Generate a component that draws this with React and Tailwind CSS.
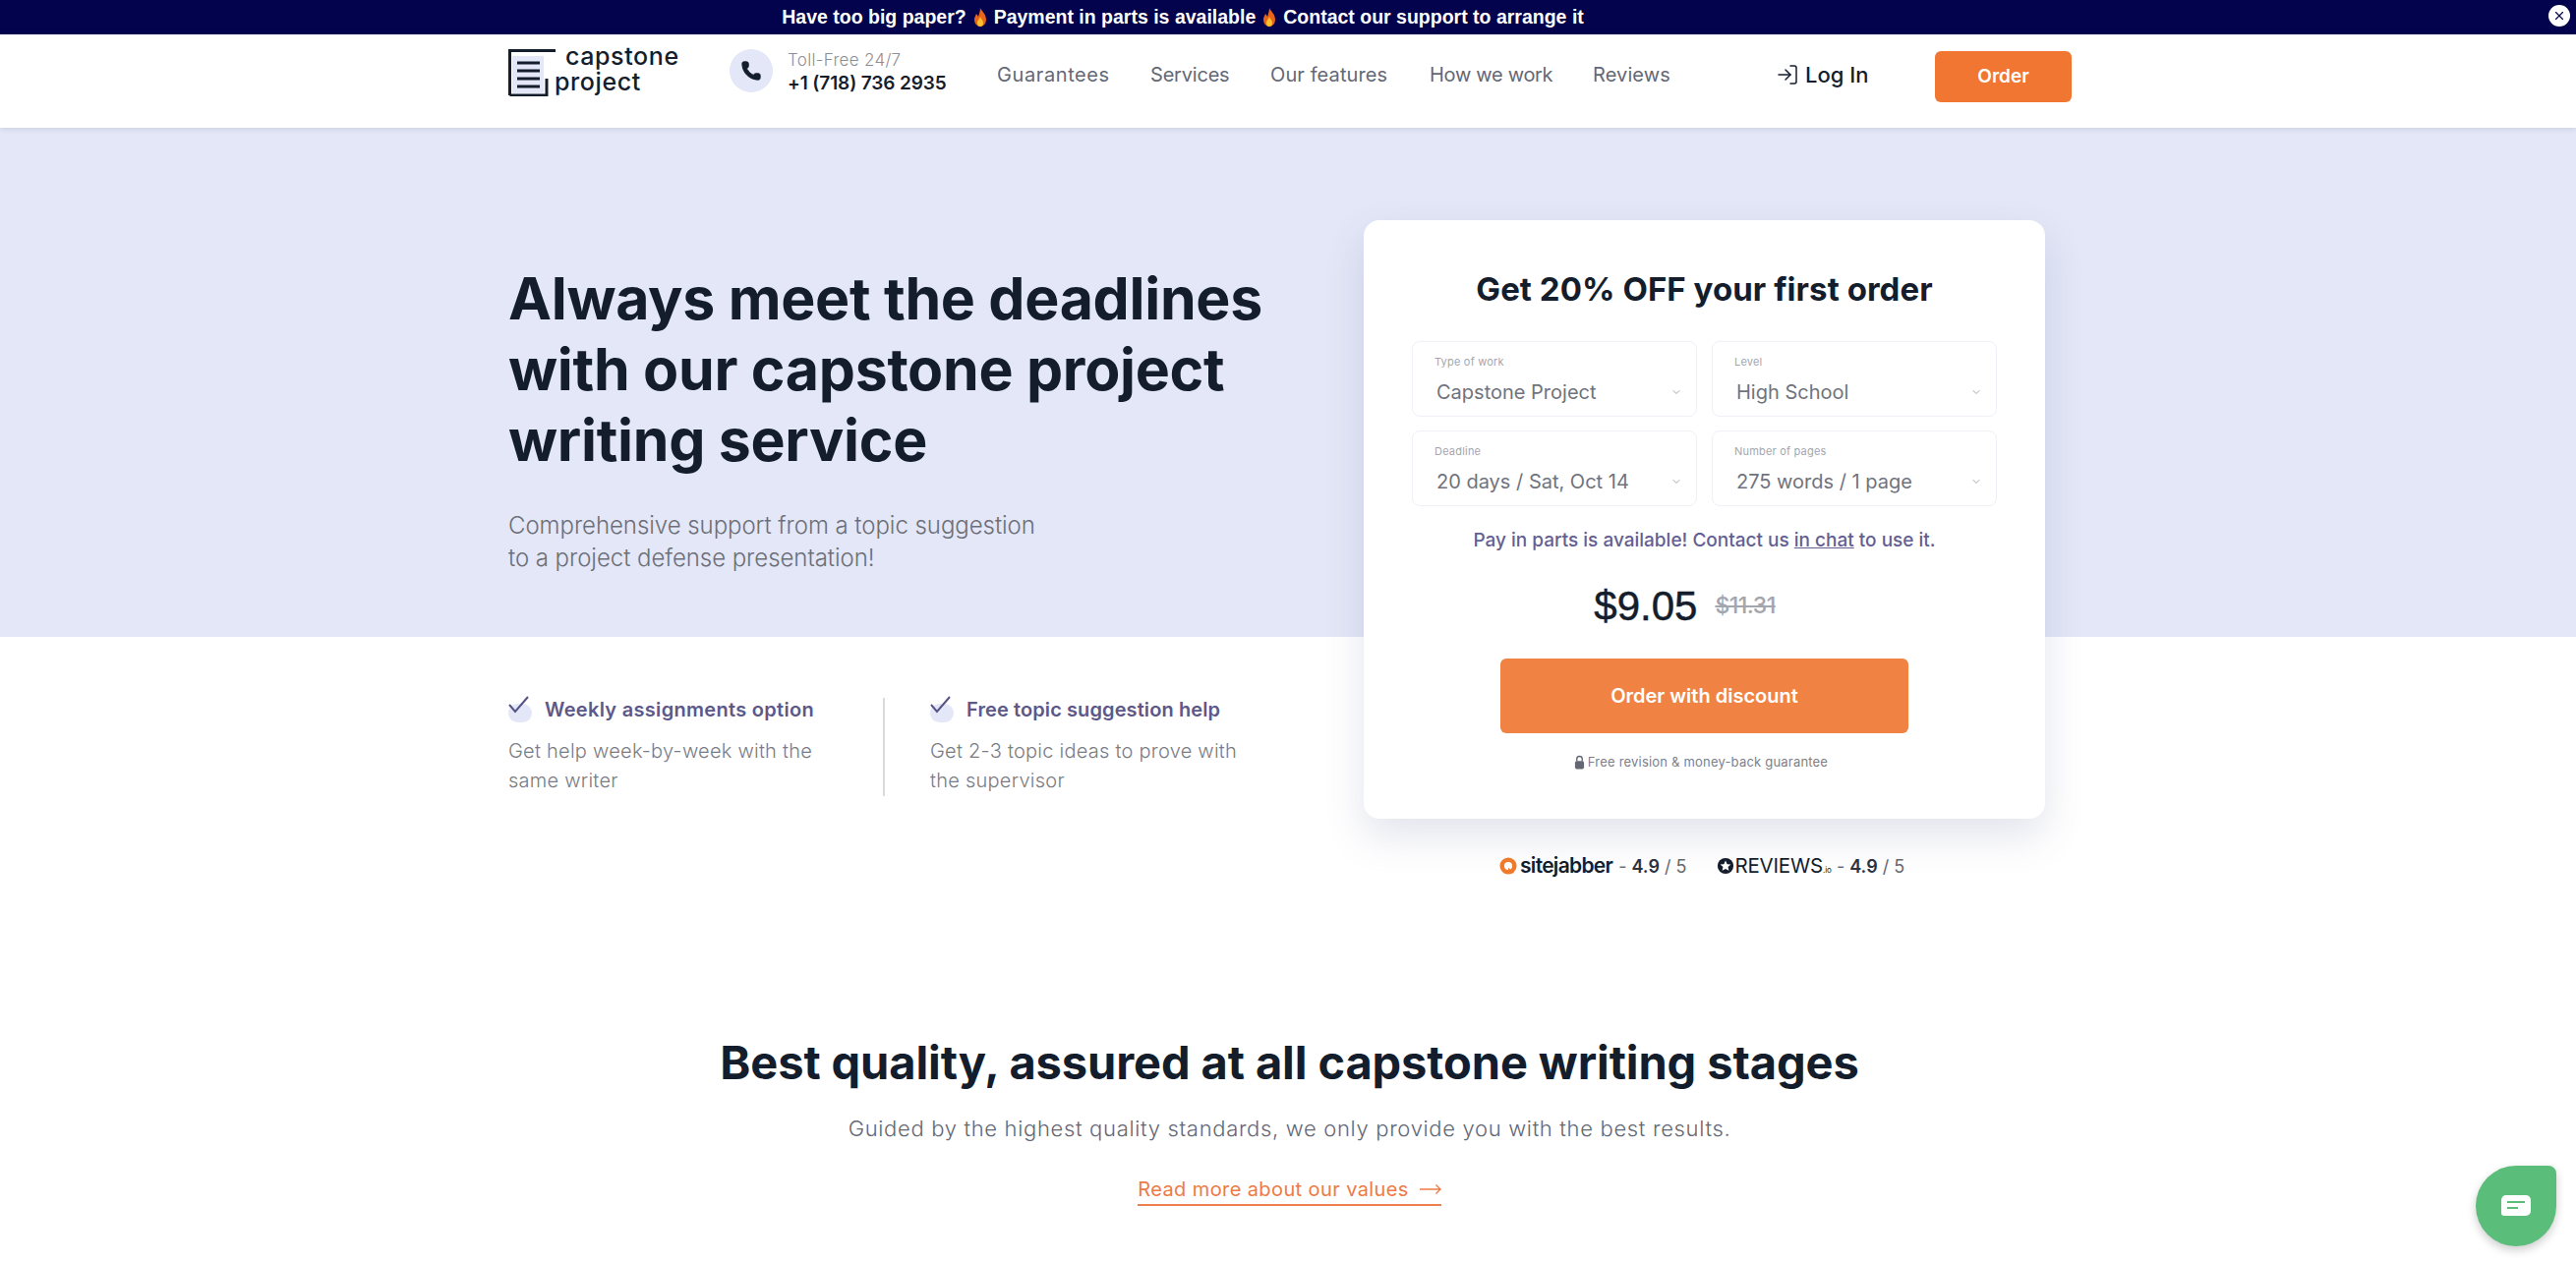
import { ChevronDown, LogIn, Phone, X } from "lucide-react";

const fields = [
  { label: "Type of work", value: "Capstone Project" },
  { label: "Level", value: "High School" },
  { label: "Deadline", value: "20 days / Sat, Oct 14" },
  { label: "Number of pages", value: "275 words / 1 page" },
];

const navLinks = [
  { name: "Guarantees", width: "w-[156px]", track: "tracking-[0.6px]" },
  { name: "Services", width: "w-[122px]", track: "tracking-[-0.2px]" },
  { name: "Our features", width: "w-[162px]", track: "tracking-[0.1px]" },
  { name: "How we work", width: "w-[166px]", track: "tracking-[-0.3px]" },
  { name: "Reviews", width: "w-[186px]", track: "tracking-[0.1px]" },
];

const perks = [
  {
    title: "Weekly assignments option",
    track: "tracking-[0.3px]",
    text: ["Get help week-by-week with the", "same writer"],
  },
  {
    title: "Free topic suggestion help",
    track: "tracking-[0.1px]",
    text: ["Get 2-3 topic ideas to prove with", "the supervisor"],
  },
];

function Flame() {
  return (
    <svg viewBox="0 0 14 20" className="w-[16px] h-[20px] mx-[6px] inline-block align-[-4px]">
      <path d="M7 0c1 3 6 6 6 12a6 7 0 0 1-12 0c0-3 1.500-4 2-6 1 1 1.500 2 2 3 1-3 2-6 2-9z" fill="#e8641b" />
      <path d="M7 9c.5 2 3 3.500 3 6a3 4 0 0 1-6 0c0-2.500 2.500-3.500 3-6z" fill="#fbc02d" />
    </svg>
  );
}

function Logo() {
  return (
    <div className="flex items-start w-[178px] h-[50px]">
      <svg viewBox="0 0 50 48" className="w-[50px] h-[48px] shrink-0">
        <rect x="4" y="7" width="32" height="38" fill="#e3e7f7" />
        <path d="M1.500 47V1.500H48M1.500 47H39V30" fill="none" stroke="#141d2c" strokeWidth="3" />
        <path d="M9 14h23M9 22h23M9 30h23M9 38h23" stroke="#141d2c" strokeWidth="3" />
      </svg>
      <div className="text-[#141d2c] text-[25px] leading-[27px] font-medium tracking-[0.6px]">
        <div className="ml-[8px] -mt-[6px]">capstone</div>
        <div className="-ml-[3px] -mt-[1px]">project</div>
      </div>
    </div>
  );
}

function Field({ label, value }) {
  return (
    <div className="h-[77px] border border-[#f0f1f6] rounded-[8px] pl-[24px] pr-[12px] pt-[13px] bg-white">
      <div className="text-[11px] leading-[14px] text-[#a4a6ad] -ml-[2px] tracking-[0.2px]">{label}</div>
      <div className="flex items-center justify-between mt-[10px]">
        <span className="text-[20px] leading-[28px] text-[#70737e]">{value}</span>
        <ChevronDown className="w-[12px] h-[12px] text-[#a4a6ad] mr-[2px]" />
      </div>
    </div>
  );
}

function Perk({ title, track, text }) {
  return (
    <div>
      <div className="flex items-center h-[26px]">
        <div className="w-[24px] h-[19px] mt-[6px] rounded-full bg-[#e3e7f7] relative">
          <svg viewBox="0 0 22 18" className="absolute -top-[8px] left-0 w-[22px] h-[18px]">
            <path d="M1 9l6 7L20 1" fill="none" stroke="#565285" strokeWidth="2" />
          </svg>
        </div>
        <span className={`${track} ml-[13px] text-[20px] font-semibold text-[#5c5889]`}>{title}</span>
      </div>
      <div className="mt-[14px] text-[20px] leading-[30px] font-light text-[#797c85] tracking-[0.25px]">
        {text.map((line) => (
          <div key={line}>{line}</div>
        ))}
      </div>
    </div>
  );
}

export default function App() {
  return (
    <div className="h-[1284px] overflow-hidden bg-white relative font-['Inter',sans-serif]">
      <div className="h-[35px] bg-[#02024d] flex items-center justify-center relative pr-[214px]">
        <p className="font-['Liberation_Sans',sans-serif] font-bold text-[19.500px] text-white">
          Have too big paper?
          <Flame />
          Payment in parts is available
          <Flame />
          Contact our support to arrange it
        </p>
        <button className="absolute right-[6px] top-[5px] w-[22px] h-[22px] rounded-full bg-white flex items-center justify-center">
          <X className="w-[14px] h-[14px] text-[#02024d]" strokeWidth={2} />
        </button>
      </div>

      <header className="h-[95px] bg-white shadow-[0_1px_6px_rgba(20,29,44,0.12)] relative">
        <div className="ml-[517px] w-[1590px] flex items-start pt-[15px]">
          <Logo />
          <div className="ml-[47px] w-[44px] h-[44px] rounded-full bg-[#e3e7f7] flex items-center justify-center">
            <Phone className="w-[22px] h-[22px] text-[#141d2c]" fill="#141d2c" strokeWidth={1} />
          </div>
          <div className="ml-[15px] w-[213px]">
            <div className="text-[17px] leading-[22px] font-light text-[#8d8f96] tracking-[0.3px]">Toll-Free 24/7</div>
            <div className="text-[19px] leading-[26px] font-semibold text-[#141d2c] tracking-[-0.1px]">+1 (718) 736 2935</div>
          </div>
          <nav className="flex items-center h-[52px]">
            {navLinks.map((link) => (
              <a key={link.name} className={`${link.width} ${link.track} text-[20px] text-[#646875]`}>
                {link.name}
              </a>
            ))}
          </nav>
          <a className="flex items-center h-[52px] text-[22px] font-medium text-[#141d2c] w-[162px]">
            <LogIn className="w-[24px] h-[24px] mr-[6px] text-[#141d2c]" strokeWidth={1.500} />
            Log In
          </a>
          <button className="w-[139px] h-[52px] mt-[2px] rounded-[6px] bg-[#f07632] text-white text-[19px] font-semibold">
            Order
          </button>
        </div>
      </header>

      <main className="bg-[linear-gradient(#e3e7f7_518px,#ffffff_518px)] pl-[517px] flex">
        <div className="w-[870px] pt-[138px]">
          <h1 className="text-[59px] leading-[72px] font-bold text-[#141d2c] tracking-[-0.3px]">
            Always meet the deadlines
            <br />
            with our capstone project
            <br />
            writing service
          </h1>
          <p className="mt-[34px] text-[24px] leading-[33px] font-light text-[#6c6f78] tracking-[-0.05px]">
            Comprehensive support from a topic suggestion
            <br />
            to a project defense presentation!
          </p>
          <div className="flex mt-[125px]">
            <div className="w-[381px]">
              <Perk {...perks[0]} />
            </div>
            <div className="w-[2px] h-[100px] mt-[1px] bg-[#d9dadd]" />
            <div className="ml-[46px]">
              <Perk {...perks[1]} />
            </div>
          </div>
        </div>

        <div className="w-[693px]">
          <section className="mt-[94px] h-[609px] rounded-[16px] bg-white shadow-[0_18px_40px_rgba(80,90,140,0.16)] px-[49px] pt-[48px]">
            <h2 className="text-[33px] leading-[44px] font-bold text-[#141d2c] text-center tracking-[0.05px]">
              Get 20% OFF your first order
            </h2>
            <div className="grid grid-cols-2 gap-x-[15px] gap-y-[14px] mt-[31px]">
              {fields.map((f) => (
                <Field key={f.label} {...f} />
              ))}
            </div>
            <p className="mt-[23px] text-[19px] leading-[24px] font-medium text-[#645f92] text-center">
              Pay in parts is available! Contact us <span className="underline">in chat</span> to use it.
            </p>
            <div className="flex items-center justify-center mt-[33px] h-[42px] pr-[40px]">
              <span className="font-['Liberation_Sans',sans-serif] text-[42px] text-[#141d2c] [-webkit-text-stroke:0.5px_#141d2c]">$9.05</span>
              <span className="ml-[18px] text-[23px] text-[#a4a6ad] line-through font-medium tracking-[-0.5px]">$11.31</span>
            </div>
            <button className="block mx-auto mt-[33px] w-[415px] h-[76px] rounded-[6px] bg-[#f08344] text-white text-[20px] font-semibold">
              Order with discount
            </button>
            <div className="flex items-center justify-center mt-[20px] pr-[7px] text-[13px] leading-[18px] text-[#7d808a] tracking-[0.2px]">
              <svg viewBox="0 0 12 16" className="w-[11px] h-[15px] mr-[3px]">
                <path d="M3 7V4.500a3 3 0 0 1 6 0V7" fill="none" stroke="#646875" strokeWidth="1.500" />
                <rect x="1" y="6.500" width="10" height="9" rx="2" fill="#646875" />
              </svg>
              Free revision &amp; money-back guarantee
            </div>
          </section>
          <div className="flex items-center mt-[34px] ml-[138px] h-[28px] text-[18px] text-[#646875]">
            <svg viewBox="0 0 20 20" className="w-[18px] h-[18px] mr-[3px]">
              <circle cx="10" cy="10" r="7" fill="none" stroke="#ef7a2c" strokeWidth="5" />
              <path d="M10 12l7 6h-7z" fill="#ef7a2c" />
            </svg>
            <span className="text-[21px] font-semibold text-[#141d2c] tracking-[-0.7px]">sitejabber</span>
            <span className="ml-[6px]">-</span>
            <span className="ml-[5px] font-semibold text-[#2b3240]">4.9</span>
            <span className="ml-[5px]">/ 5</span>
            <svg viewBox="0 0 20 20" className="w-[18px] h-[18px] ml-[31px]">
              <circle cx="10" cy="10" r="9" fill="#141d2c" />
              <path d="M10 4l1.800 4 4.200.4-3.200 2.800 1 4.200-3.800-2.200-3.800 2.200 1-4.200L4 8.400 8.200 8z" fill="#fff" />
            </svg>
            <span className="text-[20.500px] text-[#141d2c] tracking-[-0.2px]">REVIEWS</span>
            <span className="text-[8px] mt-[8px] text-[#141d2c]">.io</span>
            <span className="ml-[5px]">-</span>
            <span className="ml-[5px] font-semibold text-[#2b3240]">4.9</span>
            <span className="ml-[5px]">/ 5</span>
          </div>
        </div>
      </main>

      <section className="mt-[158px] pl-[3px] text-center">
        <h2 className="text-[47px] leading-[56px] font-bold text-[#141d2c] tracking-[-0.1px]">
          Best quality, assured at all capstone writing stages
        </h2>
        <p className="mt-[23px] text-[22px] leading-[32px] font-light text-[#646875] tracking-[0.67px]">
          Guided by the highest quality standards, we only provide you with the best results.
        </p>
        <a className="inline-flex items-center mt-[31px] pb-0 border-b-2 border-[#ee8050] text-[20px] leading-[30px] text-[#ee7a45] tracking-[0.4px]">
          Read more about our values
          <svg viewBox="0 0 24 12" className="w-[22px] h-[12px] ml-[11px]">
            <path d="M0 6h23M18 1l5 5-5 5" fill="none" stroke="#ee7a45" strokeWidth="1.500" />
          </svg>
        </a>
      </section>

      <button className="absolute left-[2518px] top-[1186px] w-[82px] h-[82px] rounded-[41px] rounded-tr-[8px] bg-[#5bbd7a] shadow-[0_4px_10px_rgba(0,0,0,0.2)] flex items-center justify-center">
        <svg viewBox="0 0 32 24" className="w-[32px] h-[24px]">
          <path d="M6 1h20a5 5 0 0 1 5 5v11a5 5 0 0 1-5 5H4a3 3 0 0 1-3-3V6a5 5 0 0 1 5-5z" fill="#fff" />
          <path d="M7 8h18M7 14h11" stroke="#5bbd7a" strokeWidth="2" />
        </svg>
      </button>
    </div>
  );
}
